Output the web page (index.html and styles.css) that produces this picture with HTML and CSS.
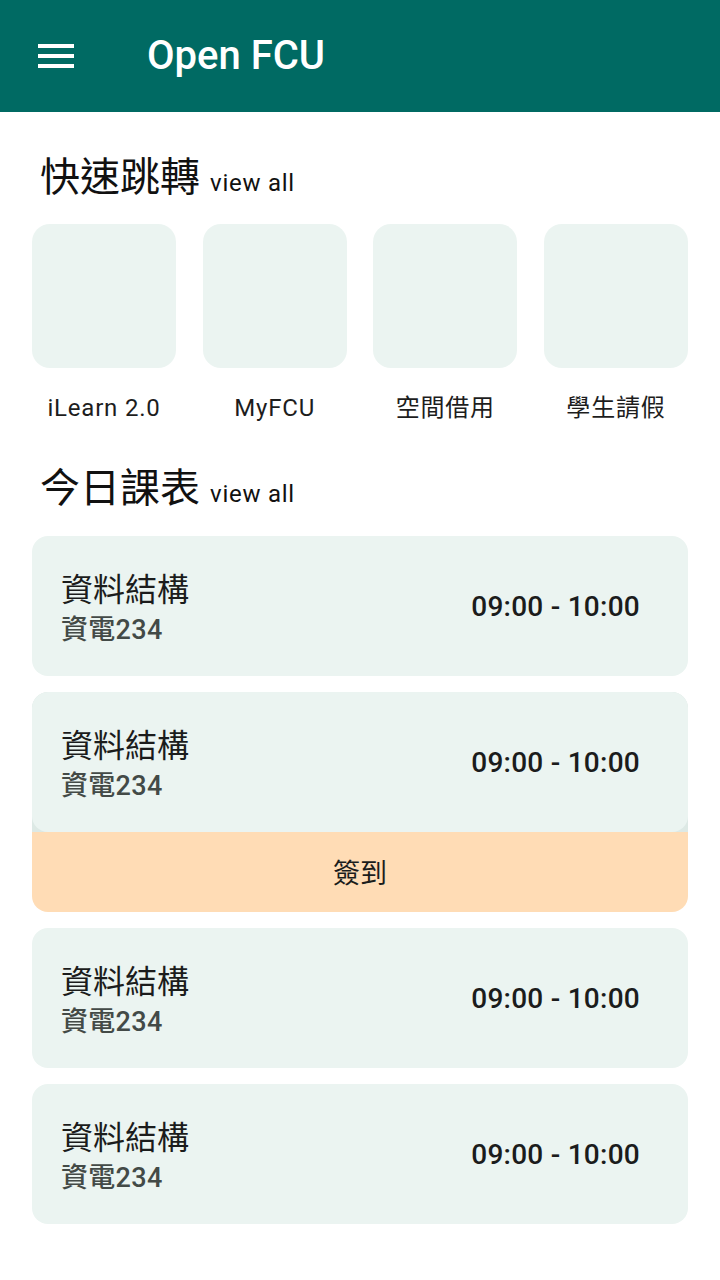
FILE: index.html
```html
<!DOCTYPE html>
<html lang="zh-Hant">
<head>
<meta charset="utf-8">
<link rel="stylesheet" href="styles.css">
</head>
<body>
<header class="appbar">
  <svg class="menu" viewBox="0 0 24 24" width="48" height="48"><path fill="#fff" d="M3 6h18v2H3zM3 11h18v2H3zM3 16h18v2H3z"/></svg>
  <h1 class="title">Open FCU</h1>
</header>
<main class="content">
  <div class="section-head">
    <h2 class="section-title">快速跳轉</h2>
    <span class="view-all">view all</span>
  </div>
  <div class="shortcuts">
    <div class="shortcut"><div class="tile"></div><span class="tile-label">iLearn 2.0</span></div>
    <div class="shortcut"><div class="tile"></div><span class="tile-label">MyFCU</span></div>
    <div class="shortcut"><div class="tile"></div><span class="tile-label">空間借用</span></div>
    <div class="shortcut"><div class="tile"></div><span class="tile-label">學生請假</span></div>
  </div>
  <div class="section-head second">
    <h2 class="section-title">今日課表</h2>
    <span class="view-all">view all</span>
  </div>
  <div class="courses">
    <div class="course">
      <div class="course-info"><span class="course-name">資料結構</span><span class="course-room">資電234</span></div>
      <span class="course-time">09:00 - 10:00</span>
    </div>
    <div class="course-wrap">
      <div class="course">
        <div class="course-info"><span class="course-name">資料結構</span><span class="course-room">資電234</span></div>
        <span class="course-time">09:00 - 10:00</span>
      </div>
      <div class="checkin">簽到</div>
    </div>
    <div class="course">
      <div class="course-info"><span class="course-name">資料結構</span><span class="course-room">資電234</span></div>
      <span class="course-time">09:00 - 10:00</span>
    </div>
    <div class="course">
      <div class="course-info"><span class="course-name">資料結構</span><span class="course-room">資電234</span></div>
      <span class="course-time">09:00 - 10:00</span>
    </div>
  </div>
</main>
</body>
</html>
```
FILE: styles.css
```css
* { box-sizing: border-box; }
html, body { margin: 0; padding: 0; background: #fff; }
body {
  font-family: Roboto, "Noto Sans CJK TC", sans-serif;
  color: #1b1c1c;
  width: 720px;
}
.appbar {
  height: 112px;
  background: #006a63;
  display: flex;
  align-items: center;
  padding-left: 32px;
}
.menu { display: block; flex: none; }
.title {
  margin: 0 0 0 67px;
  font-size: 40px;
  font-weight: 500;
  color: #fff;
  line-height: 1;
}
.content { padding: 0 32px 40px; }
.section-head {
  display: flex;
  align-items: baseline;
  padding: 38px 8px 0;
  height: 112px;
}
.section-head.second { padding-top: 37px; height: 112px; }
.section-title {
  margin: 0;
  font-family: "Noto Sans CJK TC", sans-serif;
  font-size: 40px;
  font-weight: 400;
  line-height: 48px;
  color: #111;
}
.view-all {
  margin-left: 10px;
  font-size: 24px;
  letter-spacing: 0.75px;
  color: #111;
}
.shortcuts {
  display: flex;
  justify-content: space-between;
}
.shortcut {
  width: 144px;
  display: flex;
  flex-direction: column;
  align-items: center;
}
.tile {
  width: 144px;
  height: 144px;
  border-radius: 18px;
  background: #ebf4f1;
}
.tile-label {
  margin-top: 24px;
  font-size: 24px;
  line-height: 32px;
  letter-spacing: 0.8px;
  color: #1d1d1d;
}
.courses {
  display: flex;
  flex-direction: column;
  gap: 16px;
}
.course {
  height: 140px;
  border-radius: 16px;
  background: #ebf4f1;
  display: flex;
  align-items: center;
  justify-content: space-between;
  padding: 0 48px 0 29px;
}
.course-info {
  display: flex;
  flex-direction: column;
  padding-top: 5px;
}
.course-name {
  font-family: "Noto Sans CJK TC", sans-serif;
  font-size: 32px;
  line-height: 42px;
  color: #1b1c1c;
}
.course-room {
  font-size: 27px;
  line-height: 44px;
  font-weight: 500;
  letter-spacing: 0.3px;
  color: #434a47;
}
.course-time {
  font-size: 28px;
  font-weight: 500;
  letter-spacing: 0.25px;
  color: #1b1c1c;
}
.course-wrap {
  border-radius: 16px;
  overflow: hidden;
  background: linear-gradient(#dde9e5 0 140px, #ffdcb5 140px);
}
.checkin {
  height: 80px;
  display: flex;
  align-items: center;
  justify-content: center;
  font-size: 27px;
  padding-bottom: 2px;
  color: #1b1c1c;
}
```
